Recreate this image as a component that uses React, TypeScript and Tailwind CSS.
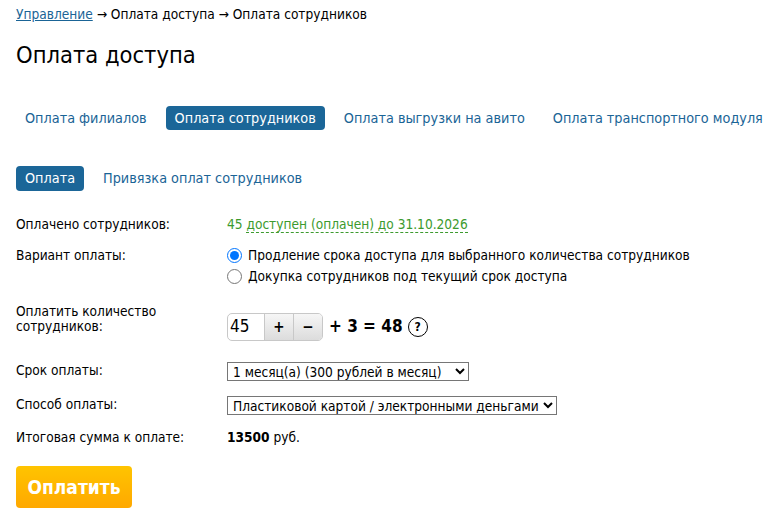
import React, { useState } from 'react';

const tabs = ['Оплата филиалов', 'Оплата сотрудников', 'Оплата выгрузки на авито', 'Оплата транспортного модуля'];

export default function App() {
  const [count, setCount] = useState(45);
  const [variant, setVariant] = useState('extend');

  return (
    <div className="min-h-screen bg-white px-4 text-[13.6px] text-black" style={{ fontFamily: '"DejaVu Sans Condensed", "DejaVu Sans", Tahoma, sans-serif' }}>
      {/* Breadcrumbs */}
      <div className="pt-[5px] leading-[18px]">
        <a href="#" className="text-[#1a6496] underline">Управление</a>
        <span> → Оплата доступа → Оплата сотрудников</span>
      </div>

      <h1 className="mt-[17px] text-[23.5px] leading-[30px]">Оплата доступа</h1>

      {/* Tabs */}
      <div className="mt-[36px] flex items-center gap-[10px] whitespace-nowrap">
        {tabs.map((t) => (
          <span
            key={t}
            className={`rounded-[4px] px-[9px] py-[3px] text-[14.3px] leading-[18px] ${
              t === 'Оплата сотрудников' ? 'bg-[#1b6698] text-white' : 'text-[#1a6496]'
            }`}
          >
            {t}
          </span>
        ))}
      </div>

      {/* Sub tabs */}
      <div className="mt-[36px] flex items-center gap-[10px] whitespace-nowrap">
        <span className="rounded-[4px] bg-[#1b6698] px-[9px] py-[3px] text-[14.3px] leading-[19px] text-white">Оплата</span>
        <span className="px-[9px] text-[14.3px] leading-[19px] text-[#1a6496]">Привязка оплат сотрудников</span>
      </div>

      {/* Form */}
      <div className="mt-[24px] flex">
        <div className="w-[211px] leading-[18px]">Оплачено сотрудников:</div>
        <div className="leading-[18px] text-[#3c9a2e]">
          45 <span className="border-b border-dashed border-[#3c9a2e]">доступен (оплачен) до 31.10.2026</span>
        </div>
      </div>

      <div className="mt-[13px] flex">
        <div className="w-[211px] leading-[18px]">Вариант оплаты:</div>
        <div className="flex flex-col gap-[3px]">
          <label className="flex items-center gap-[6px] leading-[18px]">
            <input type="radio" className="m-0 h-[15px] w-[15px] accent-[#0075ff]" checked={variant === 'extend'} onChange={() => setVariant('extend')} />
            Продление срока доступа для выбранного количества сотрудников
          </label>
          <label className="flex items-center gap-[6px] leading-[18px]">
            <input type="radio" className="m-0 h-[15px] w-[15px]" checked={variant === 'buy'} onChange={() => setVariant('buy')} />
            Докупка сотрудников под текущий срок доступа
          </label>
        </div>
      </div>

      <div className="mt-[19px] flex">
        <div className="w-[211px] leading-[15px]">Оплатить количество<br />сотрудников:</div>
        <div className="mt-[9px] flex items-center">
          <div className="flex h-[28px] overflow-hidden rounded-[5px] border border-[#c8c8c8]">
            <input
              value={count}
              onChange={(e) => setCount(Number(e.target.value) || 0)}
              className="w-[36px] pl-[2px] text-[17px] outline-none"
            />
            <button onClick={() => setCount(count + 1)} className="w-[29px] border-l border-[#c8c8c8] bg-gradient-to-b from-[#f6f6f6] to-[#dcdcdc] text-[15px] font-bold">+</button>
            <button onClick={() => setCount(Math.max(0, count - 1))} className="w-[29px] border-l border-[#c8c8c8] bg-gradient-to-b from-[#f6f6f6] to-[#dcdcdc] text-[15px] font-bold">−</button>
          </div>
          <span className="ml-[6px] text-[17px] font-bold">+ 3 = {count + 3}</span>
          <span className="ml-[5px] flex h-[20px] w-[20px] items-center justify-center rounded-full border-[1.5px] border-black text-[12px] font-bold">?</span>
        </div>
      </div>

      <div className="mt-[20px] flex">
        <div className="w-[211px] leading-[18px]">Срок оплаты:</div>
        <div className="mt-[1px]">
          <select className="h-[19px] w-[242px] border border-[#767676] px-[1px] text-[13.6px] leading-[17px]">
            <option>1 месяц(а) (300 рублей в месяц)</option>
          </select>
        </div>
      </div>

      <div className="mt-[13px] flex">
        <div className="w-[211px] leading-[18px]">Способ оплаты:</div>
        <div className="mt-[1px]">
          <select className="h-[19px] w-[330px] border border-[#767676] px-[1px] text-[13.6px] leading-[17px]">
            <option>Пластиковой картой / электронными деньгами</option>
          </select>
        </div>
      </div>

      <div className="mt-[11px] flex">
        <div className="w-[211px] leading-[18px]">Итоговая сумма к оплате:</div>
        <div className="leading-[18px]"><b>13500</b> руб.</div>
      </div>

      <button className="mt-[20px] h-[42px] w-[116px] rounded-[4px] bg-gradient-to-b from-[#ffc400] to-[#ffa800] text-[19px] font-bold text-white">
        Оплатить
      </button>
    </div>
  );
}
